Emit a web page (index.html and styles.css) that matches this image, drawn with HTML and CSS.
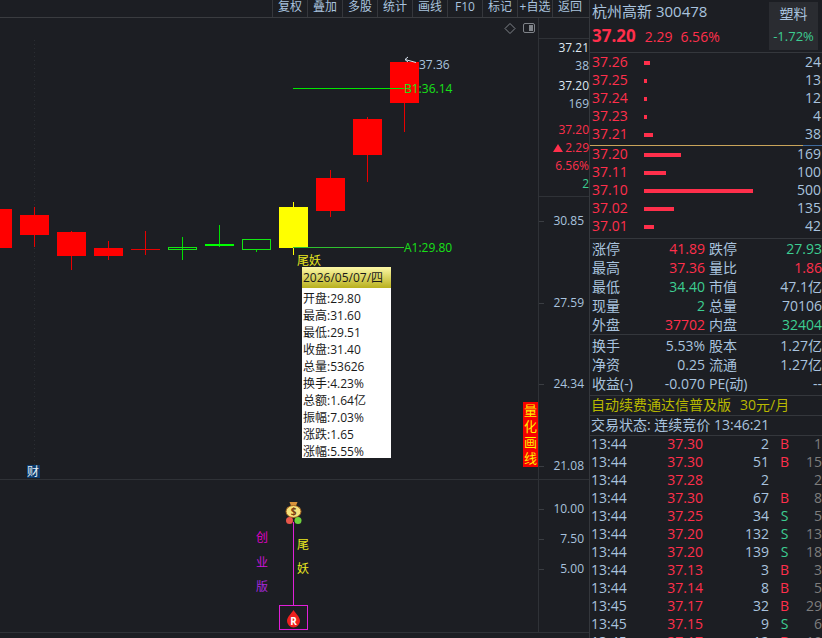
FILE: index.html
```html
<!DOCTYPE html>
<html lang="zh">
<head>
    <meta charset="UTF-8">
    <title>杭州高新 300478</title>
    <link rel="stylesheet" href="styles.css">
</head>
<body>
<div class="app">
    <div class="chart-pane">
        <div class="toolbar">
            <span class="tool">复权</span><span class="tool">叠加</span><span class="tool">多股</span><span class="tool">统计</span><span class="tool">画线</span><span class="tool">F10</span><span class="tool">标记</span><span class="tool">+自选</span><span class="tool">返回</span>
        </div>

        <!-- K line -->
        <div class="kline-row">
            <div class="plot">
                <svg class="plot-svg" width="538" height="461" viewBox="0 18 538 461">
                    <line class="grid-dots" x1="34.5" y1="40" x2="34.5" y2="479"/>

                    <rect class="up" x="-17" y="209" width="29" height="39"/>
                    <line class="up-wick" x1="34.5" y1="207" x2="34.5" y2="247"/>
                    <rect class="up" x="20" y="215" width="29" height="20"/>
                    <line class="up-wick" x1="71.5" y1="231" x2="71.5" y2="270"/>
                    <rect class="up" x="57" y="232" width="29" height="24"/>
                    <line class="up-wick" x1="108.5" y1="241" x2="108.5" y2="260"/>
                    <rect class="up" x="94" y="248" width="29" height="8"/>
                    <line class="up-wick" x1="145.5" y1="231" x2="145.5" y2="255"/>
                    <line class="up-wick" x1="131" y1="249.5" x2="160" y2="249.5"/>

                    <line class="down-wick" x1="182.5" y1="237" x2="182.5" y2="260"/>
                    <rect class="down-box" x="168.5" y="247.5" width="28" height="2"/>
                    <line class="down-wick" x1="219.5" y1="225" x2="219.5" y2="247"/>
                    <rect class="down" x="205" y="244" width="29" height="2"/>
                    <line class="down-wick" x1="256.5" y1="250" x2="256.5" y2="252"/>
                    <rect class="down-box" x="242.5" y="239.5" width="28" height="10"/>

                    <line class="mark-wick" x1="293.5" y1="202" x2="293.5" y2="255"/>
                    <rect class="mark" x="279" y="207" width="29" height="41"/>

                    <line class="up-wick" x1="330.5" y1="170" x2="330.5" y2="217"/>
                    <rect class="up" x="316" y="178" width="29" height="33"/>
                    <line class="up-wick" x1="367.5" y1="117" x2="367.5" y2="182"/>
                    <rect class="up" x="353" y="119" width="29" height="36"/>
                    <line class="up-wick" x1="404.5" y1="62" x2="404.5" y2="132"/>
                    <rect class="up" x="390" y="62" width="29" height="41"/>

                    <line class="level" x1="293" y1="88.5" x2="404" y2="88.5"/>
                    <line class="level level-low" x1="293" y1="247.5" x2="404" y2="247.5"/>

                    <path class="high-arrow" d="M416 62.500 L405 59.500 M405 59.500 L408 57 M405 59.500 L408 62"/>
                    <text class="lbl lbl-high" x="419" y="69">37.36</text>
                    <text class="lbl lbl-level" x="404" y="93">B1:36.14</text>
                    <text class="lbl lbl-level" x="404" y="252">A1:29.80</text>
                    <text class="lbl lbl-mark" x="297" y="265">尾妖</text>
                    <rect class="cai-box" x="27" y="465" width="13" height="13"/>
                    <text class="lbl lbl-cai" x="27" y="476">财</text>

                    <path class="ctl-icon" d="M510 23.500 L515 28.500 L510 33.500 L505 28.500 Z"/>
                    <rect class="ctl-icon" x="523.500" y="23.500" width="11" height="9" rx="1.500"/>
                    <rect class="ctl-fill" x="529" y="25" width="4" height="6"/>
                </svg>

                <div class="tip">
                    <div class="tip-date">2026/05/07/四</div>
                    <div class="tip-row">开盘:29.80</div>
                    <div class="tip-row">最高:31.60</div>
                    <div class="tip-row">最低:29.51</div>
                    <div class="tip-row">收盘:31.40</div>
                    <div class="tip-row">总量:53626</div>
                    <div class="tip-row">换手:4.23%</div>
                    <div class="tip-row">总额:1.64亿</div>
                    <div class="tip-row">振幅:7.03%</div>
                    <div class="tip-row">涨跌:1.65</div>
                    <div class="tip-row">涨幅:5.55%</div>
                </div>

                <div class="quant-tag"><span>量</span><span>化</span><span>画</span><span>线</span></div>
            </div>

            <div class="axis">
                <div class="axis-info">
                    <div class="axis-num white">37.21</div>
                    <div class="axis-num">38</div>
                    <div class="axis-num white gap-s">37.20</div>
                    <div class="axis-num">169</div>
                    <div class="axis-num red gap-l">37.20</div>
                    <div class="axis-num red"><i class="tri"></i>2.29</div>
                    <div class="axis-num red">6.56%</div>
                    <div class="axis-num green">2</div>
                </div>
                <div class="tick" style="top: 194px">30.85</div>
                <div class="tick" style="top: 276px">27.59</div>
                <div class="tick" style="top: 357px">24.34</div>
                <div class="tick" style="top: 439px">21.08</div>
            </div>
        </div>

        <!-- sub chart -->
        <div class="sub-row">
            <div class="plot">
                <svg class="plot-svg" width="538" height="154" viewBox="0 480 538 154">
                    <line class="signal" x1="293.5" y1="522" x2="293.5" y2="605"/>
                    <rect class="signal" x="279.5" y="605.5" width="28" height="24"/>

                    <path class="bag-neck" d="M289.500 502 h8 l-2 5 h-4 Z"/>
                    <ellipse class="bag" cx="293.500" cy="511.500" rx="7.500" ry="6"/>
                    <text class="bag-sign" x="293.500" y="515">$</text>
                    <circle class="ball-r" cx="289.500" cy="520.500" r="3.500"/>
                    <circle class="ball-g" cx="298" cy="520.500" r="3.500"/>

                    <path class="drop" d="M293.500 610 C296 614 300 617 300 621 A6.500 6.500 0 0 1 287 621 C287 617 291 614 293.500 610 Z"/>
                    <text class="drop-r" x="293.500" y="625">R</text>

                    <text class="lbl lbl-b1" x="256" y="542">创</text>
                    <text class="lbl lbl-b2" x="256" y="567">业</text>
                    <text class="lbl lbl-b3" x="256" y="591">版</text>
                    <text class="lbl lbl-mark" x="297" y="549">尾</text>
                    <text class="lbl lbl-mark" x="297" y="573">妖</text>
                </svg>
            </div>
            <div class="axis">
                <div class="tick" style="top: 20px">10.00</div>
                <div class="tick" style="top: 50px">7.50</div>
                <div class="tick" style="top: 80px">5.00</div>
            </div>
        </div>
    </div>

    <div class="quote">
        <div class="q-head">
            <div class="q-title">
                <div class="q-name">杭州高新 <span class="q-code">300478</span></div>
                <div class="q-price"><b>37.20</b><span>2.29</span><span>6.56%</span></div>
            </div>
            <div class="sector">
                <div class="sector-name">塑料</div>
                <div class="green">-1.72%</div>
            </div>
        </div>

        <div class="book">
            <div class="book-row"><span class="red book-price">37.26</span><i class="bar" style="width: 6px"></i><span class="book-vol">24</span></div>
            <div class="book-row"><span class="red book-price">37.25</span><i class="bar" style="width: 3px"></i><span class="book-vol">13</span></div>
            <div class="book-row"><span class="red book-price">37.24</span><i class="bar" style="width: 3px"></i><span class="book-vol">12</span></div>
            <div class="book-row"><span class="red book-price">37.23</span><i class="bar" style="width: 3px"></i><span class="book-vol">4</span></div>
            <div class="book-row"><span class="red book-price">37.21</span><i class="bar" style="width: 9px"></i><span class="book-vol">38</span></div>
        </div>
        <div class="book-split"></div>
        <div class="book book-buy">
            <div class="book-row"><span class="red book-price">37.20</span><i class="bar" style="width: 37px"></i><span class="book-vol">169</span></div>
            <div class="book-row"><span class="red book-price">37.11</span><i class="bar" style="width: 22px"></i><span class="book-vol">100</span></div>
            <div class="book-row"><span class="red book-price">37.10</span><i class="bar" style="width: 109px"></i><span class="book-vol">500</span></div>
            <div class="book-row"><span class="red book-price">37.02</span><i class="bar" style="width: 30px"></i><span class="book-vol">135</span></div>
            <div class="book-row"><span class="red book-price">37.01</span><i class="bar" style="width: 10px"></i><span class="book-vol">42</span></div>
        </div>

        <div class="stats">
            <div class="stat"><span>涨停</span><span class="val red">41.89</span><span>跌停</span><span class="val green">27.93</span></div>
            <div class="stat"><span>最高</span><span class="val red">37.36</span><span>量比</span><span class="val red">1.86</span></div>
            <div class="stat"><span>最低</span><span class="val green">34.40</span><span>市值</span><span class="val">47.1亿</span></div>
            <div class="stat"><span>现量</span><span class="val green">2</span><span>总量</span><span class="val">70106</span></div>
            <div class="stat"><span>外盘</span><span class="val red">37702</span><span>内盘</span><span class="val green">32404</span></div>
        </div>
        <div class="stats stats-fin">
            <div class="stat"><span>换手</span><span class="val">5.53%</span><span>股本</span><span class="val">1.27亿</span></div>
            <div class="stat"><span>净资</span><span class="val">0.25</span><span>流通</span><span class="val">1.27亿</span></div>
            <div class="stat"><span>收益(-)</span><span class="val">-0.070</span><span>PE(动)</span><span class="val">--</span></div>
        </div>

        <div class="ad">自动续费通达信普及版<span class="ad-price">30元/月</span></div>
        <div class="status">交易状态: 连续竞价 13:46:21</div>

        <div class="trades">
            <div class="trade"><span>13:44</span><span class="t-price red">37.30</span><span class="t-vol">2</span><span class="t-side red">B</span><span class="t-num">1</span></div>
            <div class="trade"><span>13:44</span><span class="t-price red">37.30</span><span class="t-vol">51</span><span class="t-side red">B</span><span class="t-num">15</span></div>
            <div class="trade"><span>13:44</span><span class="t-price red">37.28</span><span class="t-vol">2</span><span class="t-side"></span><span class="t-num">2</span></div>
            <div class="trade"><span>13:44</span><span class="t-price red">37.30</span><span class="t-vol">67</span><span class="t-side red">B</span><span class="t-num">8</span></div>
            <div class="trade"><span>13:44</span><span class="t-price red">37.25</span><span class="t-vol">34</span><span class="t-side green">S</span><span class="t-num">5</span></div>
            <div class="trade"><span>13:44</span><span class="t-price red">37.20</span><span class="t-vol">132</span><span class="t-side green">S</span><span class="t-num">13</span></div>
            <div class="trade"><span>13:44</span><span class="t-price red">37.20</span><span class="t-vol">139</span><span class="t-side green">S</span><span class="t-num">18</span></div>
            <div class="trade"><span>13:44</span><span class="t-price red">37.13</span><span class="t-vol">3</span><span class="t-side red">B</span><span class="t-num">3</span></div>
            <div class="trade"><span>13:44</span><span class="t-price red">37.14</span><span class="t-vol">8</span><span class="t-side red">B</span><span class="t-num">5</span></div>
            <div class="trade"><span>13:45</span><span class="t-price red">37.17</span><span class="t-vol">32</span><span class="t-side red">B</span><span class="t-num">29</span></div>
            <div class="trade"><span>13:45</span><span class="t-price red">37.15</span><span class="t-vol">9</span><span class="t-side green">S</span><span class="t-num">6</span></div>
            <div class="trade"><span>13:45</span><span class="t-price red">37.17</span><span class="t-vol">12</span><span class="t-side red">B</span><span class="t-num">10</span></div>
        </div>
    </div>
</div>
</body>
</html>
```

FILE: styles.css
```css
* { margin: 0; padding: 0; box-sizing: border-box; }

html, body {
    width: 822px;
    height: 638px;
    overflow: hidden;
    background: #1c1e23;
}

body {
    font-family: "Open Sans", "Noto Sans CJK SC", sans-serif;
    font-size: 14px;
    color: #a9c3de;
}

.red { color: #ff2f4b; }
.green { color: #3dce92; }
.white { color: #dfe8f2; }

.app {
    display: flex;
    height: 638px;
}

/* left side */
.chart-pane {
    width: 590px;
    flex: none;
    border-right: 1px solid #34373c;
}

.toolbar {
    display: flex;
    justify-content: flex-end;
    height: 18px;
    padding-right: 2px;
    border-bottom: 1px solid #3a3c40;
}

.tool {
    width: 35px;
    height: 17px;
    border-left: 1px solid #35373c;
    font-size: 12px;
    line-height: 14px;
    text-align: center;
    white-space: nowrap;
}

.kline-row {
    display: flex;
    height: 462px;
    border-bottom: 1px solid #2f3237;
}

.sub-row {
    display: flex;
    height: 153px;
    border-bottom: 1px solid #2f3237;
}

.plot {
    position: relative;
    width: 538px;
    flex: none;
    overflow: hidden;
}

.plot-svg { display: block; }

.axis {
    position: relative;
    flex: 1;
    border-left: 1px solid #2f3237;
    font-size: 12px;
}

.axis-info {
    margin-top: 20px;
    height: 159px;
    border-top: 1px solid #2f3237;
    border-bottom: 1px solid #2f3237;
}

.axis-num {
    height: 18px;
    line-height: 18px;
    text-align: right;
    white-space: nowrap;
}

.gap-s { margin-top: 2px; }
.gap-l { margin-top: 8px; }

.tri {
    display: inline-block;
    width: 0;
    height: 0;
    margin-right: 2px;
    border-left: 5px solid transparent;
    border-right: 5px solid transparent;
    border-bottom: 8px solid #ff2f4b;
}

/* scale labels sit where the price falls */
.tick {
    position: absolute;
    left: 0;
    right: 5px;
    height: 18px;
    line-height: 18px;
    text-align: right;
}

.tick::before {
    content: "";
    position: absolute;
    left: 0;
    top: 9px;
    width: 5px;
    height: 1px;
    background: #3a3d42;
}

/* candles */
.up { fill: #ff0000; }
.up-wick { stroke: #e80000; stroke-width: 1; }
.down { fill: #00ff00; }
.down-wick { stroke: #00e000; stroke-width: 1; }
.down-box { fill: none; stroke: #14e614; stroke-width: 1; }
.mark { fill: #ffff00; }
.mark-wick { stroke: #ffff00; stroke-width: 1; }
.level { stroke: #00e600; stroke-width: 1; }
.level-low { stroke: #2fc22f; }
.grid-dots { stroke: #2b2e33; stroke-width: 1; stroke-dasharray: 1 3; }
.high-arrow { fill: none; stroke: #d8e2ee; stroke-width: 1; }

.lbl { font-size: 12px; font-family: "Open Sans", "Noto Sans CJK SC", sans-serif; }
.lbl-high { fill: #a9c3de; }
.lbl-level { fill: #18e018; }
.lbl-mark { fill: #e8e820; }
.lbl-cai { fill: #e6edf5; }
.lbl-b1 { fill: #e000c8; }
.lbl-b2 { fill: #cc14d8; }
.lbl-b3 { fill: #a828dc; }
.cai-box { fill: #0b3a6c; }

.ctl-icon { fill: none; stroke: #7f8389; stroke-width: 1; }
.ctl-fill { fill: #7f8389; }

.signal { fill: none; stroke: #e020d8; stroke-width: 1; }
.ball-r { fill: #e8574a; }
.ball-g { fill: #6fd13e; }
.bag { fill: #f6e27c; stroke: #a8641f; stroke-width: 1; }
.bag-neck { fill: #d9933a; }
.bag-sign { fill: #7a3c10; font-size: 10px; font-weight: 700; text-anchor: middle; font-family: "Open Sans", sans-serif; }
.drop { fill: #f0201e; }
.drop-r { fill: #ffffff; font-size: 10px; font-weight: 700; text-anchor: middle; font-family: "Open Sans", sans-serif; }

/* popup over the candle */
.tip {
    position: absolute;
    left: 302px;
    top: 249px;
    width: 89px;
    height: 191px;
    background: #ffffff;
    color: #1a1a1a;
    font-size: 12px;
    overflow: hidden;
}

.tip-date {
    height: 21px;
    margin-bottom: 2px;
    padding-left: 1px;
    line-height: 21px;
    background: linear-gradient(#fdf8a6, #b8b01e);
    white-space: nowrap;
}

.tip-row {
    height: 17px;
    line-height: 17px;
    padding-left: 1px;
    white-space: nowrap;
}

.quant-tag {
    position: absolute;
    left: 523px;
    top: 384px;
    width: 15px;
    height: 65px;
    padding-top: 0;
    background: #f50000;
    color: #ffee00;
    font-size: 13px;
    line-height: 16px;
    text-align: center;
}

.quant-tag span { display: block; }

/* right side */
.quote {
    flex: 1;
    min-width: 0;
    overflow: hidden;
}

.q-head {
    display: flex;
    justify-content: space-between;
    height: 53px;
    padding: 1px 4px 0 2px;
    border-bottom: 1px solid #34373c;
}

.q-name {
    font-size: 15px;
    line-height: 20px;
    white-space: nowrap;
}

.q-price {
    display: flex;
    align-items: baseline;
    gap: 7px;
    margin-top: 4px;
    color: #ff2f4b;
    font-size: 14px;
    line-height: 22px;
}

.q-price b {
    margin-right: 2px;
    font-size: 17px;
}

.q-price span + span { margin-left: 1px; }

.sector {
    width: 49px;
    height: 48px;
    margin-top: 1px;
    background: #2a2c31;
    text-align: center;
    font-size: 13px;
    line-height: 23px;
}

.sector-name { font-size: 14px; }

.book-row {
    display: flex;
    align-items: center;
    height: 18px;
    padding-left: 2px;
}

.book-price {
    width: 52px;
    padding-bottom: 2px;
}

.bar {
    height: 4px;
    margin-top: 2px;
    background: #ff2f4b;
}

.book-vol {
    margin-left: auto;
    padding-right: 1px;
    padding-bottom: 2px;
}

.book-split {
    height: 1px;
    margin-top: 2px;
    background: linear-gradient(to right, #c9a45a 213px, #3f6a9c 213px);
}

.book-buy { margin-top: -1px; }

.stats {
    margin-top: 3px;
    border-top: 1px solid #34373c;
}

.stat {
    display: grid;
    grid-template-columns: 50px 63px 54px 1fr;
    height: 19px;
    line-height: 19px;
    padding-left: 2px;
    white-space: nowrap;
}

.stat span:nth-child(3) { padding-left: 4px; }

.val { text-align: right; }

.stats-fin {
    margin-top: 0;
    padding-top: 1px;
    height: 61px;
}

.ad {
    height: 20px;
    line-height: 18px;
    padding-left: 1px;
    border-top: 1px solid #34373c;
    color: #b8b800;
    white-space: nowrap;
}

.ad-price { margin-left: 9px; }

.status {
    height: 21px;
    line-height: 18px;
    padding-left: 1px;
    border-top: 1px solid #34373c;
    border-bottom: 1px solid #34373c;
    white-space: nowrap;
}

.trade {
    display: grid;
    grid-template-columns: 57px 55px 66px 26px 1fr;
    height: 18px;
    line-height: 16px;
    padding-left: 1px;
}

.t-price, .t-vol { text-align: right; }
.t-side { text-align: center; padding-left: 5px; }
.t-num { text-align: right; color: #7d7d7d; }
```
